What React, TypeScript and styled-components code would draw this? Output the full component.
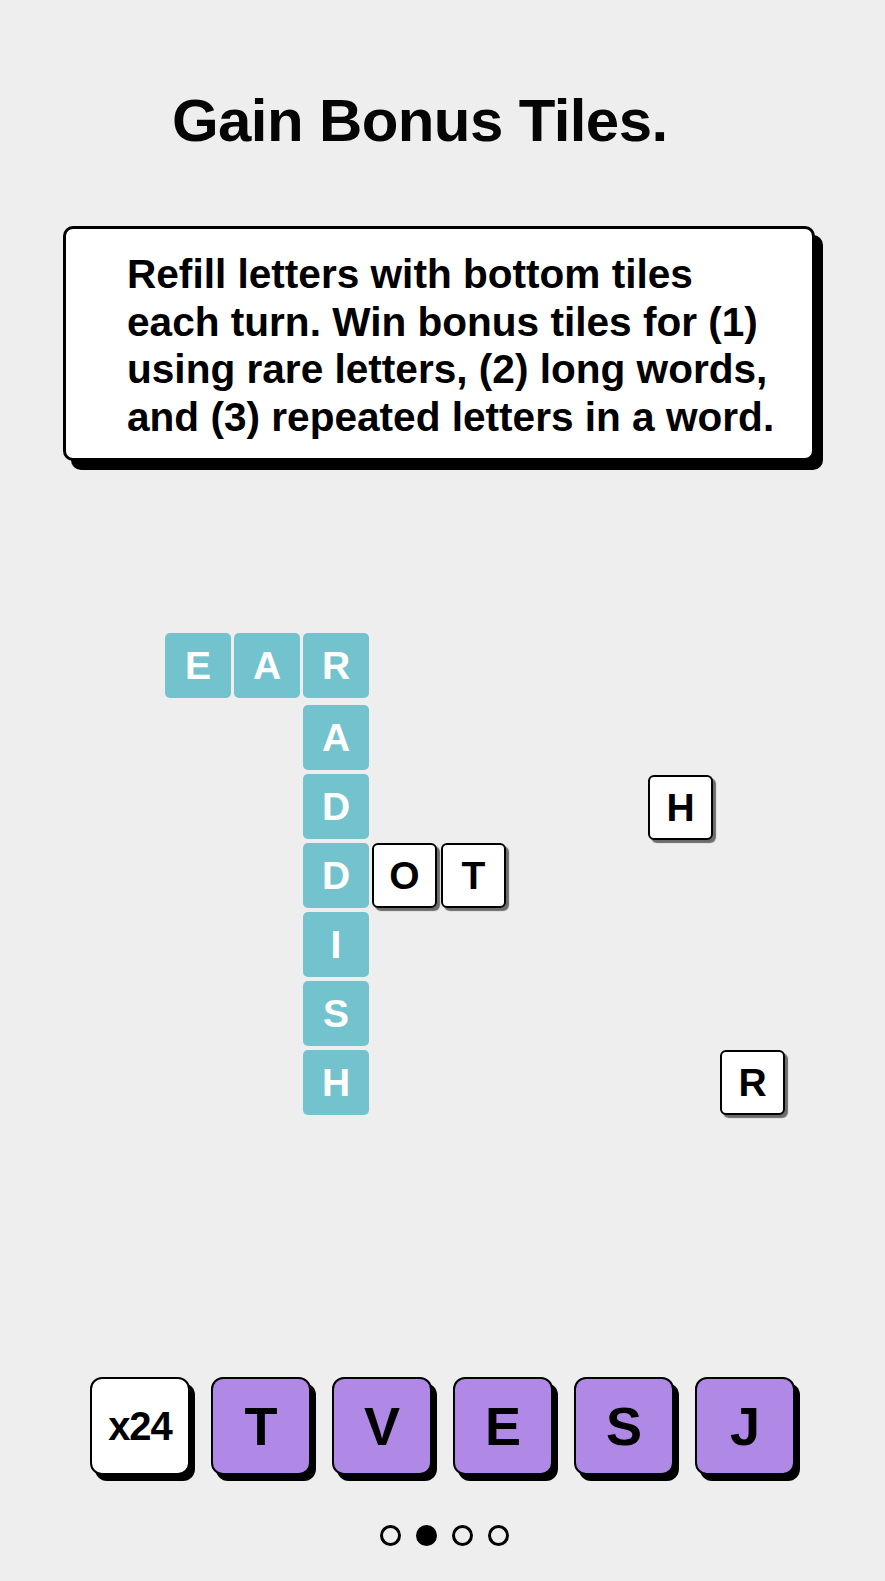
import styled, { createGlobalStyle } from "styled-components";

const GlobalStyle = createGlobalStyle`
  html, body {
    margin: 0;
    padding: 0;
    background: #eeeeee;
  }
  body {
    font-family: "Liberation Sans", Arial, sans-serif;
    color: #000;
  }
`;

const Page = styled.main`
  width: 885px;
  height: 1581px;
  display: flex;
  flex-direction: column;
  overflow: hidden;
`;

const Title = styled.h1`
  margin: 91px 0 0 172px;
  font-size: 60px;
  line-height: 60px;
  font-weight: 700;
  letter-spacing: -0.6px;
  color: #050505;
`;

const InfoCard = styled.section`
  box-sizing: border-box;
  margin: 75px 0 0 63px;
  width: 752px;
  height: 235px;
  padding: 22px 0 0 61px;
  background: #fff;
  border: 3px solid #000;
  border-radius: 10px;
  box-shadow: 8px 9px 0 #000;
`;

const InfoText = styled.p`
  margin: 0;
  font-size: 40.6px;
  line-height: 47.5px;
  font-weight: 700;
  white-space: nowrap;
`;

const Board = styled.div`
  position: relative;
  height: 916px;
`;

const Tile = styled.div<{ $x: number; $y: number; $placed?: boolean }>`
  position: absolute;
  left: ${(p) => p.$x}px;
  top: ${(p) => p.$y}px;
  box-sizing: border-box;
  width: ${(p) => (p.$placed ? 66 : 65)}px;
  height: 65px;
  display: flex;
  align-items: center;
  justify-content: center;
  font-size: 39px;
  font-weight: 700;
  line-height: 1;
  border-radius: ${(p) => (p.$placed ? 5 : 6)}px;
  background: ${(p) => (p.$placed ? "#72c3ce" : "#fff")};
  color: ${(p) => (p.$placed ? "#fff" : "#000")};
  border: ${(p) => (p.$placed ? "none" : "2px solid #000")};
  box-shadow: ${(p) => (p.$placed ? "none" : "3px 3px 1px rgba(0,0,0,0.55)")};
`;

const Rack = styled.div`
  display: flex;
  justify-content: center;
  gap: 21px;
`;

const RackTile = styled.div<{ $counter?: boolean }>`
  box-sizing: border-box;
  width: 100px;
  height: 98px;
  display: flex;
  align-items: center;
  justify-content: center;
  border: 2px solid #000;
  border-radius: 12px;
  background: ${(p) => (p.$counter ? "#fff" : "#b088e6")};
  box-shadow: 5px 6px 0 #000;
  font-size: ${(p) => (p.$counter ? 40 : 54)}px;
  font-weight: 700;
  line-height: 1;
  letter-spacing: ${(p) => (p.$counter ? "-1px" : "0")};
`;

const Dots = styled.div`
  display: flex;
  justify-content: center;
  gap: 15px;
  margin-top: 50px;
  padding-left: 3px;
`;

const Dot = styled.span<{ $active?: boolean }>`
  box-sizing: border-box;
  width: 21px;
  height: 21px;
  border-radius: 50%;
  border: 3px solid #000;
  background: ${(p) => (p.$active ? "#000" : "transparent")};
`;

// board positions: x from page left, y from top of the board area
const boardTiles = [
  { l: "E", x: 165, y: 172, placed: true },
  { l: "A", x: 234, y: 172, placed: true },
  { l: "R", x: 303, y: 172, placed: true },
  { l: "A", x: 303, y: 244, placed: true },
  { l: "D", x: 303, y: 313, placed: true },
  { l: "D", x: 303, y: 382, placed: true },
  { l: "I", x: 303, y: 451, placed: true },
  { l: "S", x: 303, y: 520, placed: true },
  { l: "H", x: 303, y: 589, placed: true },
  { l: "O", x: 372, y: 382 },
  { l: "T", x: 441, y: 382 },
  { l: "H", x: 648, y: 314 },
  { l: "R", x: 720, y: 589 },
];

const rack = ["T", "V", "E", "S", "J"];

export default function App() {
  return (
    <Page>
      <GlobalStyle />
      <Title>Gain Bonus Tiles.</Title>
      <InfoCard>
        <InfoText>
          Refill letters with bottom tiles
          <br />
          each turn. Win bonus tiles for (1)
          <br />
          using rare letters, (2) long words,
          <br />
          and (3) repeated letters in a word.
        </InfoText>
      </InfoCard>
      <Board>
        {boardTiles.map((t, i) => (
          <Tile key={i} $x={t.x} $y={t.y} $placed={t.placed}>
            {t.l}
          </Tile>
        ))}
      </Board>
      <Rack>
        <RackTile $counter>x24</RackTile>
        {rack.map((l) => (
          <RackTile key={l}>{l}</RackTile>
        ))}
      </Rack>
      <Dots>
        <Dot />
        <Dot $active />
        <Dot />
        <Dot />
      </Dots>
    </Page>
  );
}
